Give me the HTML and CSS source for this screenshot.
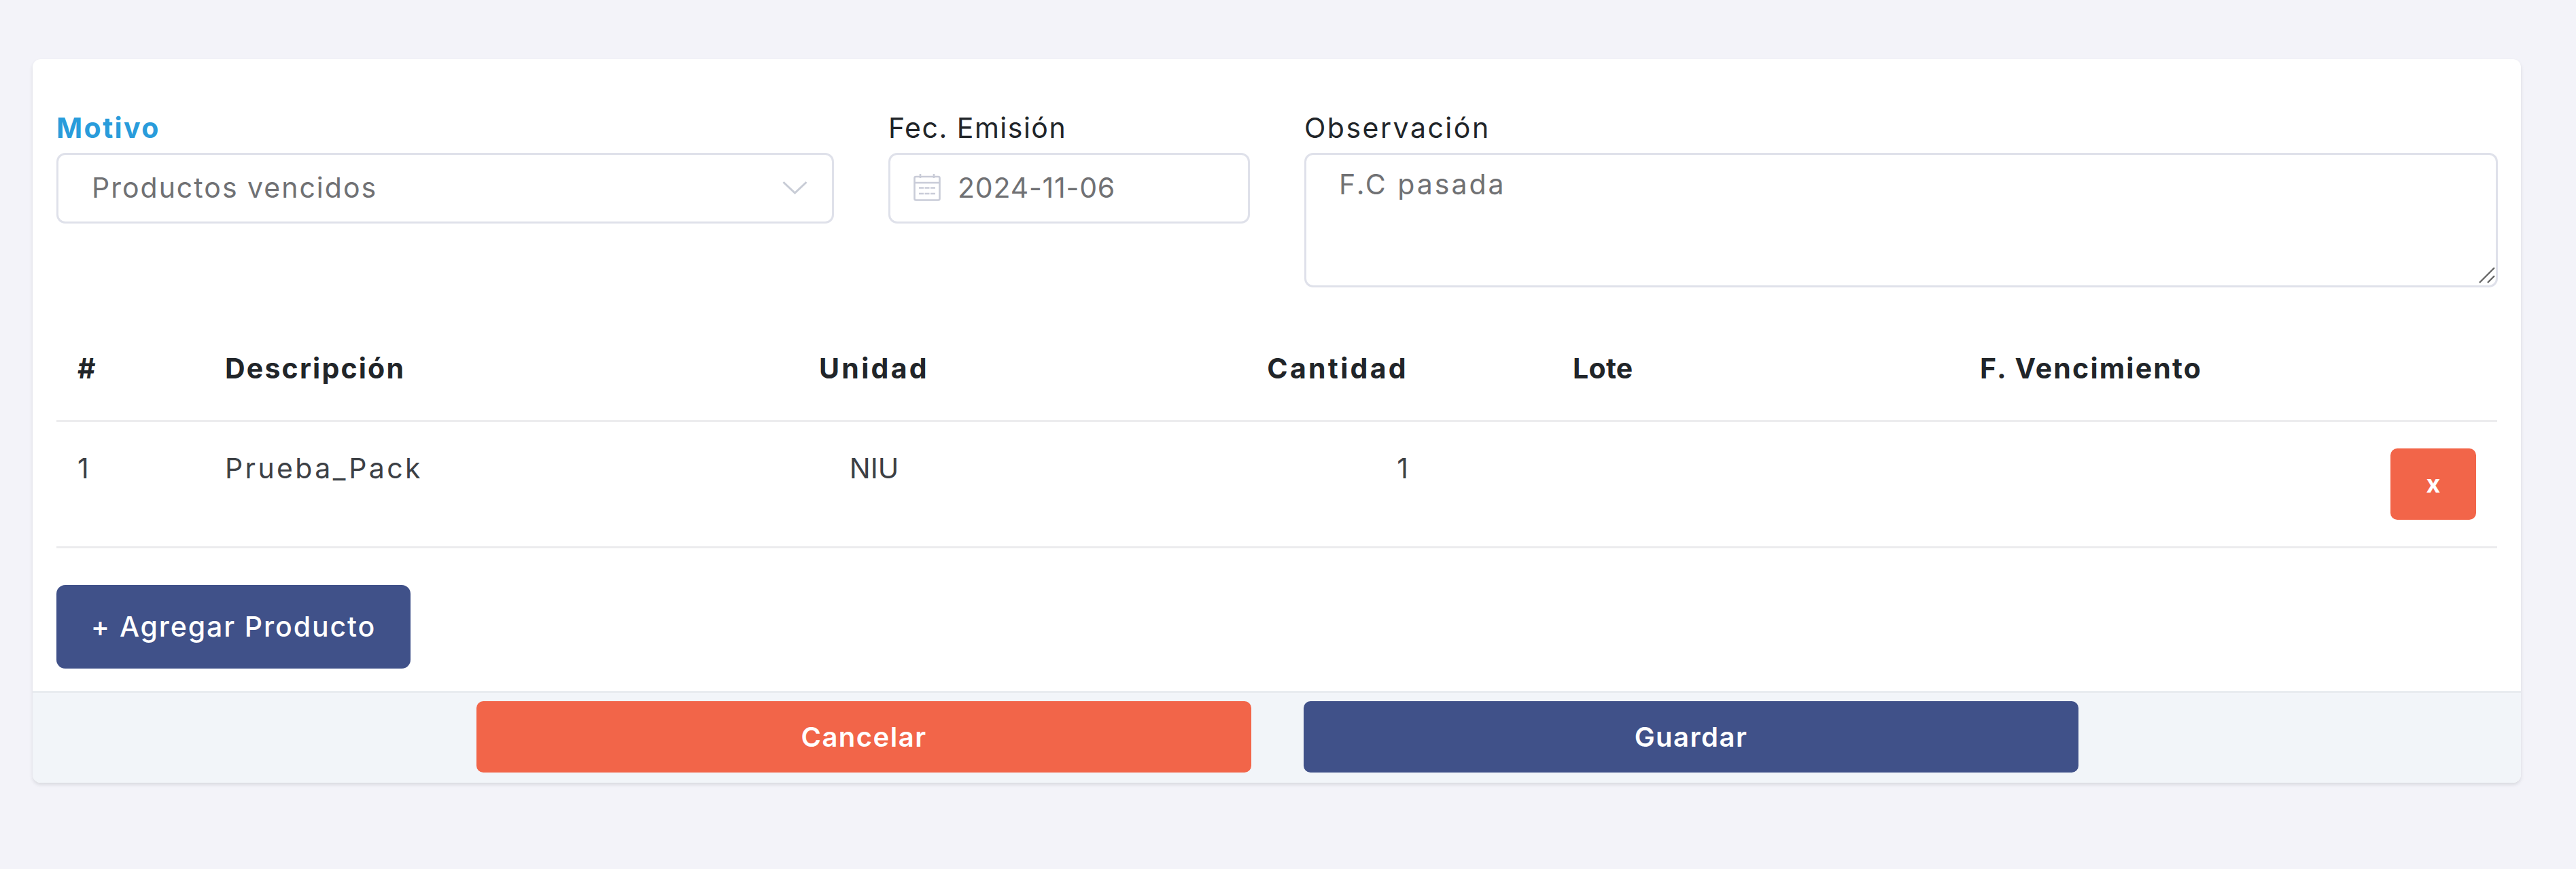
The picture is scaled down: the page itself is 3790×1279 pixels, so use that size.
FILE: index.html
```html
<!DOCTYPE html>
<html lang="es">
<head>
<meta charset="utf-8">
<title>Motivo</title>
<link rel="stylesheet" href="styles.css">
</head>
<body>
<main class="card">
  <section class="card-body">
    <div class="fields">
      <div class="field">
        <div class="label label-motivo">Motivo</div>
        <div class="control control-select">
          <span class="value value-select">Productos vencidos</span>
          <svg class="chevron" width="37" height="20" viewBox="0 0 37 20"><polyline points="1.5,2 18.5,18 35.5,2" fill="none" stroke="#c8ccd6" stroke-width="3"/></svg>
        </div>
      </div>
      <div class="field">
        <div class="label label-fec">Fec. Emisión</div>
        <div class="control control-date">
          <svg class="calendar" width="40" height="40" viewBox="0 0 40 40" fill="none" stroke="#c9ccd8" stroke-width="2.6"><rect x="1.5" y="4" width="37" height="34.5" rx="2"/><line x1="1.5" y1="13" x2="38.5" y2="13"/><line x1="10" y1="0" x2="10" y2="6"/><line x1="30" y1="0" x2="30" y2="6"/><line x1="8" y1="20.5" x2="32" y2="20.5" stroke-dasharray="7 1.5"/><line x1="8" y1="29" x2="32" y2="29" stroke-dasharray="7 1.5"/></svg>
          <span class="value value-date">2024-11-06</span>
        </div>
      </div>
      <div class="field">
        <div class="label label-obs">Observación</div>
        <div class="control control-area">
          <span class="value value-area">F.C pasada</span>
          <svg class="grip" width="24" height="24" viewBox="0 0 24 24" stroke="#666" stroke-width="2.4" fill="none"><line x1="1" y1="23" x2="23" y2="1"/><line x1="13" y1="23" x2="23" y2="13"/></svg>
        </div>
      </div>
    </div>

    <table class="items">
      <colgroup>
        <col class="col-num"><col class="col-desc"><col class="col-unit"><col class="col-qty"><col class="col-lot"><col class="col-exp"><col class="col-act">
      </colgroup>
      <thead>
        <tr>
          <th>#</th>
          <th>Descripción</th>
          <th class="center wide">Unidad</th>
          <th class="right wide">Cantidad</th>
          <th class="lot tight">Lote</th>
          <th>F. Vencimiento</th>
          <th></th>
        </tr>
      </thead>
      <tbody>
        <tr>
          <td>1</td>
          <td class="name">Prueba_Pack</td>
          <td class="center">NIU</td>
          <td class="right">1</td>
          <td class="lot"></td>
          <td></td>
          <td class="act"><button class="btn btn-x" type="button">x</button></td>
        </tr>
      </tbody>
    </table>

    <button class="btn btn-add" type="button">+ Agregar Producto</button>
  </section>
  <footer class="card-footer">
    <button class="btn btn-cancel" type="button">Cancelar</button>
    <button class="btn btn-save" type="button">Guardar</button>
  </footer>
</main>
</body>
</html>
```
FILE: styles.css
```css
* { box-sizing: border-box; }
html, body { margin: 0; height: 100%; }
body {
  background: #f3f3f9;
  padding: 87px 81px 0 48px;
  font-family: Inter, "Liberation Sans", sans-serif;
  color: #212529;
}
.card {
  background: #fff;
  border-radius: 12px;
  box-shadow: 0 3px 5px rgba(56, 65, 74, .14);
  overflow: hidden;
}
.card-body { padding: 76px 35px 33px; }
.fields {
  display: grid;
  grid-template-columns: 1144px 532px 1756px;
  column-gap: 80px;
  align-items: start;
}
.label {
  font-size: 41px;
  line-height: 50px;
  margin-bottom: 12px;
  white-space: nowrap;
}
.label-motivo { font-weight: 700; color: #299cdb; letter-spacing: 2.4px; }
.label-fec { letter-spacing: 1.5px; }
.label-obs { letter-spacing: 2.5px; }
.control {
  border: 3px solid #dfe1ea;
  border-radius: 13px;
  display: flex;
  background: #fff;
  color: #707174;
  font-size: 41px;
}
.value { white-space: nowrap; }
.value-select { letter-spacing: 2px; }
.value-date { letter-spacing: .8px; }
.value-area { letter-spacing: 3px; }
.control-select {
  height: 104px;
  padding: 0 36px 3px 49px;
  align-items: center;
  justify-content: space-between;
}
.control-date {
  height: 104px;
  padding: 0 0 3px 34px;
  align-items: center;
  gap: 25px;
}
.control-area {
  height: 198px;
  padding: 18px 0 0 48px;
  position: relative;
}
.grip { position: absolute; right: 1px; bottom: 3px; }
.items {
  width: 100%;
  margin-top: 39px;
  border-collapse: collapse;
  table-layout: fixed;
  font-size: 41px;
}
.col-num { width: 217px; }
.col-desc { width: 800px; }
.col-unit { width: 372px; }
.col-qty { width: 633px; }
.col-lot { width: 775px; }
.col-exp { width: 500px; }
.col-act { width: 294px; }
.items th {
  height: 157px;
  padding: 4px 33px 0;
  text-align: left;
  font-weight: 700;
  letter-spacing: 2.2px;
  white-space: nowrap;
  border-bottom: 3px solid #ececee;
}
.items td {
  height: 186px;
  padding: 43px 33px 0;
  vertical-align: top;
  line-height: 50px;
  color: #3c4045;
  border-bottom: 3px solid #ececee;
}
.items th:nth-child(-n+2), .items td:nth-child(-n+2) { padding-left: 31px; }
.items .wide { letter-spacing: 3.3px; }
.items .tight { letter-spacing: .3px; }
.items .name { letter-spacing: 3.4px; }
.items .center { text-align: center; }
.items .right { text-align: right; }
.items .lot { padding-left: 209px; }
.items .act { padding: 39px 31px 0 0; text-align: right; }
.btn {
  border: 0;
  border-radius: 10px;
  color: #fff;
  font-family: inherit;
  font-size: 40px;
  font-weight: 600;
  padding: 0;
  display: block;
}
.btn-x {
  width: 126px;
  height: 105px;
  background: #f26549;
  margin-left: auto;
  font-size: 36px;
  font-weight: 700;
}
.btn-add {
  width: 521px;
  height: 123px;
  margin-top: 54px;
  background: #405189;
  border-radius: 13px;
  font-size: 41px;
  font-weight: 500;
  letter-spacing: 1.9px;
}
.card-footer {
  height: 135px;
  background: #f2f5f9;
  border-top: 3px solid #e9ecf0;
  padding: 12px 0 0 653px;
  display: grid;
  grid-template-columns: 1140px 1140px;
  column-gap: 77px;
  align-items: start;
}
.btn-cancel, .btn-save { height: 105px; letter-spacing: 1.5px; }
.btn-cancel { background: #f26549; }
.btn-save { background: #405189; }
```
